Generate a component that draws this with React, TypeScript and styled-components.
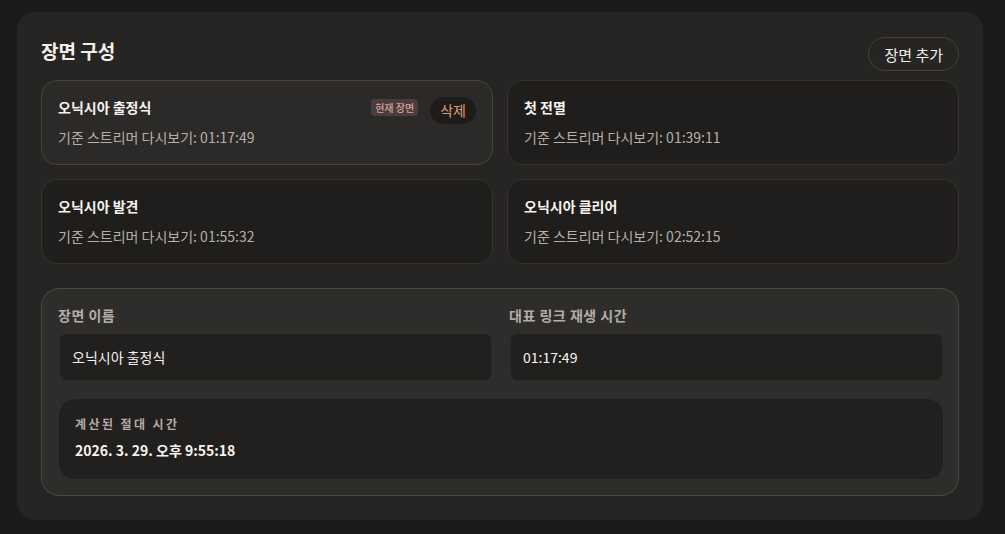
import { useState } from 'react';
import styled, { createGlobalStyle } from 'styled-components';

const GlobalStyle = createGlobalStyle`
  html, body {
    margin: 0;
    padding: 0;
    background: #1b1a19;
  }
  body {
    font-family: "Noto Sans CJK KR", "Noto Sans", sans-serif;
    color: #f2efe9;
  }
`;

const Page = styled.div`
  padding: 12px 22px 13px 17px;
`;

const Panel = styled.section`
  background: #262523;
  border-radius: 18px;
  padding: 22px 24px 24px 24px;
  display: flex;
  flex-direction: column;
`;

const Header = styled.div`
  display: flex;
  align-items: center;
  justify-content: space-between;
  height: 38px;
  margin-bottom: 8px;
`;

const Title = styled.h2`
  margin: 0;
  font-size: 19px;
  font-weight: 700;
  color: #f4f1ec;
  position: relative;
  top: -3px;
`;

const AddButton = styled.button`
  font-family: inherit;
  height: 34px;
  padding: 0 15px;
  border-radius: 999px;
  border: 1px solid #45423e;
  background: #262523;
  color: #f2efe9;
  font-size: 15px;
  font-weight: 400;
  position: relative;
  top: 1px;
`;

const SceneGrid = styled.div`
  display: grid;
  grid-template-columns: 1fr 1fr;
  gap: 14px;
`;

const SceneCard = styled.div<{ $active?: boolean }>`
  height: 85px;
  box-sizing: border-box;
  border-radius: 16px;
  border: 1px solid ${(p) => (p.$active ? '#46433f' : '#35322f')};
  background: ${(p) => (p.$active ? '#2c2a28' : '#1f1e1c')};
  padding: 15px 16px 0 16px;
  display: flex;
  flex-direction: column;
`;

const CardTop = styled.div`
  display: flex;
  align-items: center;
  height: 22px;
  gap: 12px;
`;

const SceneName = styled.div`
  font-size: 14px;
  font-weight: 700;
  color: #f6f3ee;
  flex: 1;
`;

const Badge = styled.span`
  font-size: 10px;
  font-weight: 500;
  color: #d8a2a0;
  background: #4b3c3d;
  border-radius: 4px;
  padding: 1px 4px;
  line-height: 15px;
`;

const DeleteButton = styled.button`
  font-family: inherit;
  font-size: 14px;
  color: #e39a72;
  background: #1d1c1a;
  border: none;
  border-radius: 999px;
  height: 27px;
  padding: 0 10px;
  position: relative;
  top: 3px;
`;

const SceneMeta = styled.div`
  margin-top: 9px;
  font-size: 14px;
  color: #b7b0a8;
`;

const EditPanel = styled.div`
  margin-top: 24px;
  background: #2e2d2b;
  border: 1px solid #4a4845;
  border-radius: 18px;
  padding: 16px 15px 16px 17px;
  display: flex;
  flex-direction: column;
  gap: 18px;
`;

const FieldRow = styled.div`
  display: grid;
  grid-template-columns: 1fr 1fr;
  gap: 18px;
`;

const Field = styled.label`
  display: flex;
  flex-direction: column;
  gap: 8px;
`;

const FieldLabel = styled.span`
  font-size: 14px;
  font-weight: 600;
  color: #b3ada6;
  letter-spacing: 0.5px;
  margin-left: -1px;
`;

const Input = styled.input`
  font-family: inherit;
  height: 48px;
  min-height: 48px;
  flex-shrink: 0;
  box-sizing: border-box;
  border-radius: 8px;
  border: 1px solid #2b2a27;
  background: #21201e;
  color: #f7f4ef;
  font-size: 14px;
  font-weight: 400;
  padding: 0 12px;
  outline: none;
`;

const Computed = styled.div`
  height: 80px;
  flex-shrink: 0;
  box-sizing: border-box;
  border-radius: 16px;
  background: #21201e;
  padding: 16px 16px 0 16px;
  display: flex;
  flex-direction: column;
  gap: 8px;
`;

const ComputedLabel = styled.span`
  font-size: 12px;
  font-weight: 600;
  color: #b3ada6;
  letter-spacing: 2.4px;
`;

const ComputedValue = styled.span`
  font-size: 14px;
  font-weight: 700;
  color: #f6f3ee;
`;

type Scene = { name: string; time: string };

const scenes: Scene[] = [
  { name: '오닉시아 출정식', time: '01:17:49' },
  { name: '첫 전멸', time: '01:39:11' },
  { name: '오닉시아 발견', time: '01:55:32' },
  { name: '오닉시아 클리어', time: '02:52:15' },
];

export default function App() {
  const [current] = useState(0);
  const [name, setName] = useState(scenes[0].name);
  const [time, setTime] = useState(scenes[0].time);

  return (
    <Page>
      <GlobalStyle />
      <Panel>
        <Header>
          <Title>장면 구성</Title>
          <AddButton type="button">장면 추가</AddButton>
        </Header>
        <SceneGrid>
          {scenes.map((s, i) => (
            <SceneCard key={s.name} $active={i === current}>
              <CardTop>
                <SceneName>{s.name}</SceneName>
                {i === current && (
                  <>
                    <Badge>현재 장면</Badge>
                    <DeleteButton type="button">삭제</DeleteButton>
                  </>
                )}
              </CardTop>
              <SceneMeta>기준 스트리머 다시보기: {s.time}</SceneMeta>
            </SceneCard>
          ))}
        </SceneGrid>
        <EditPanel>
          <FieldRow>
            <Field>
              <FieldLabel>장면 이름</FieldLabel>
              <Input value={name} onChange={(e) => setName(e.target.value)} />
            </Field>
            <Field>
              <FieldLabel>대표 링크 재생 시간</FieldLabel>
              <Input value={time} onChange={(e) => setTime(e.target.value)} />
            </Field>
          </FieldRow>
          <Computed>
            <ComputedLabel>계산된 절대 시간</ComputedLabel>
            <ComputedValue>2026. 3. 29. 오후 9:55:18</ComputedValue>
          </Computed>
        </EditPanel>
      </Panel>
    </Page>
  );
}
